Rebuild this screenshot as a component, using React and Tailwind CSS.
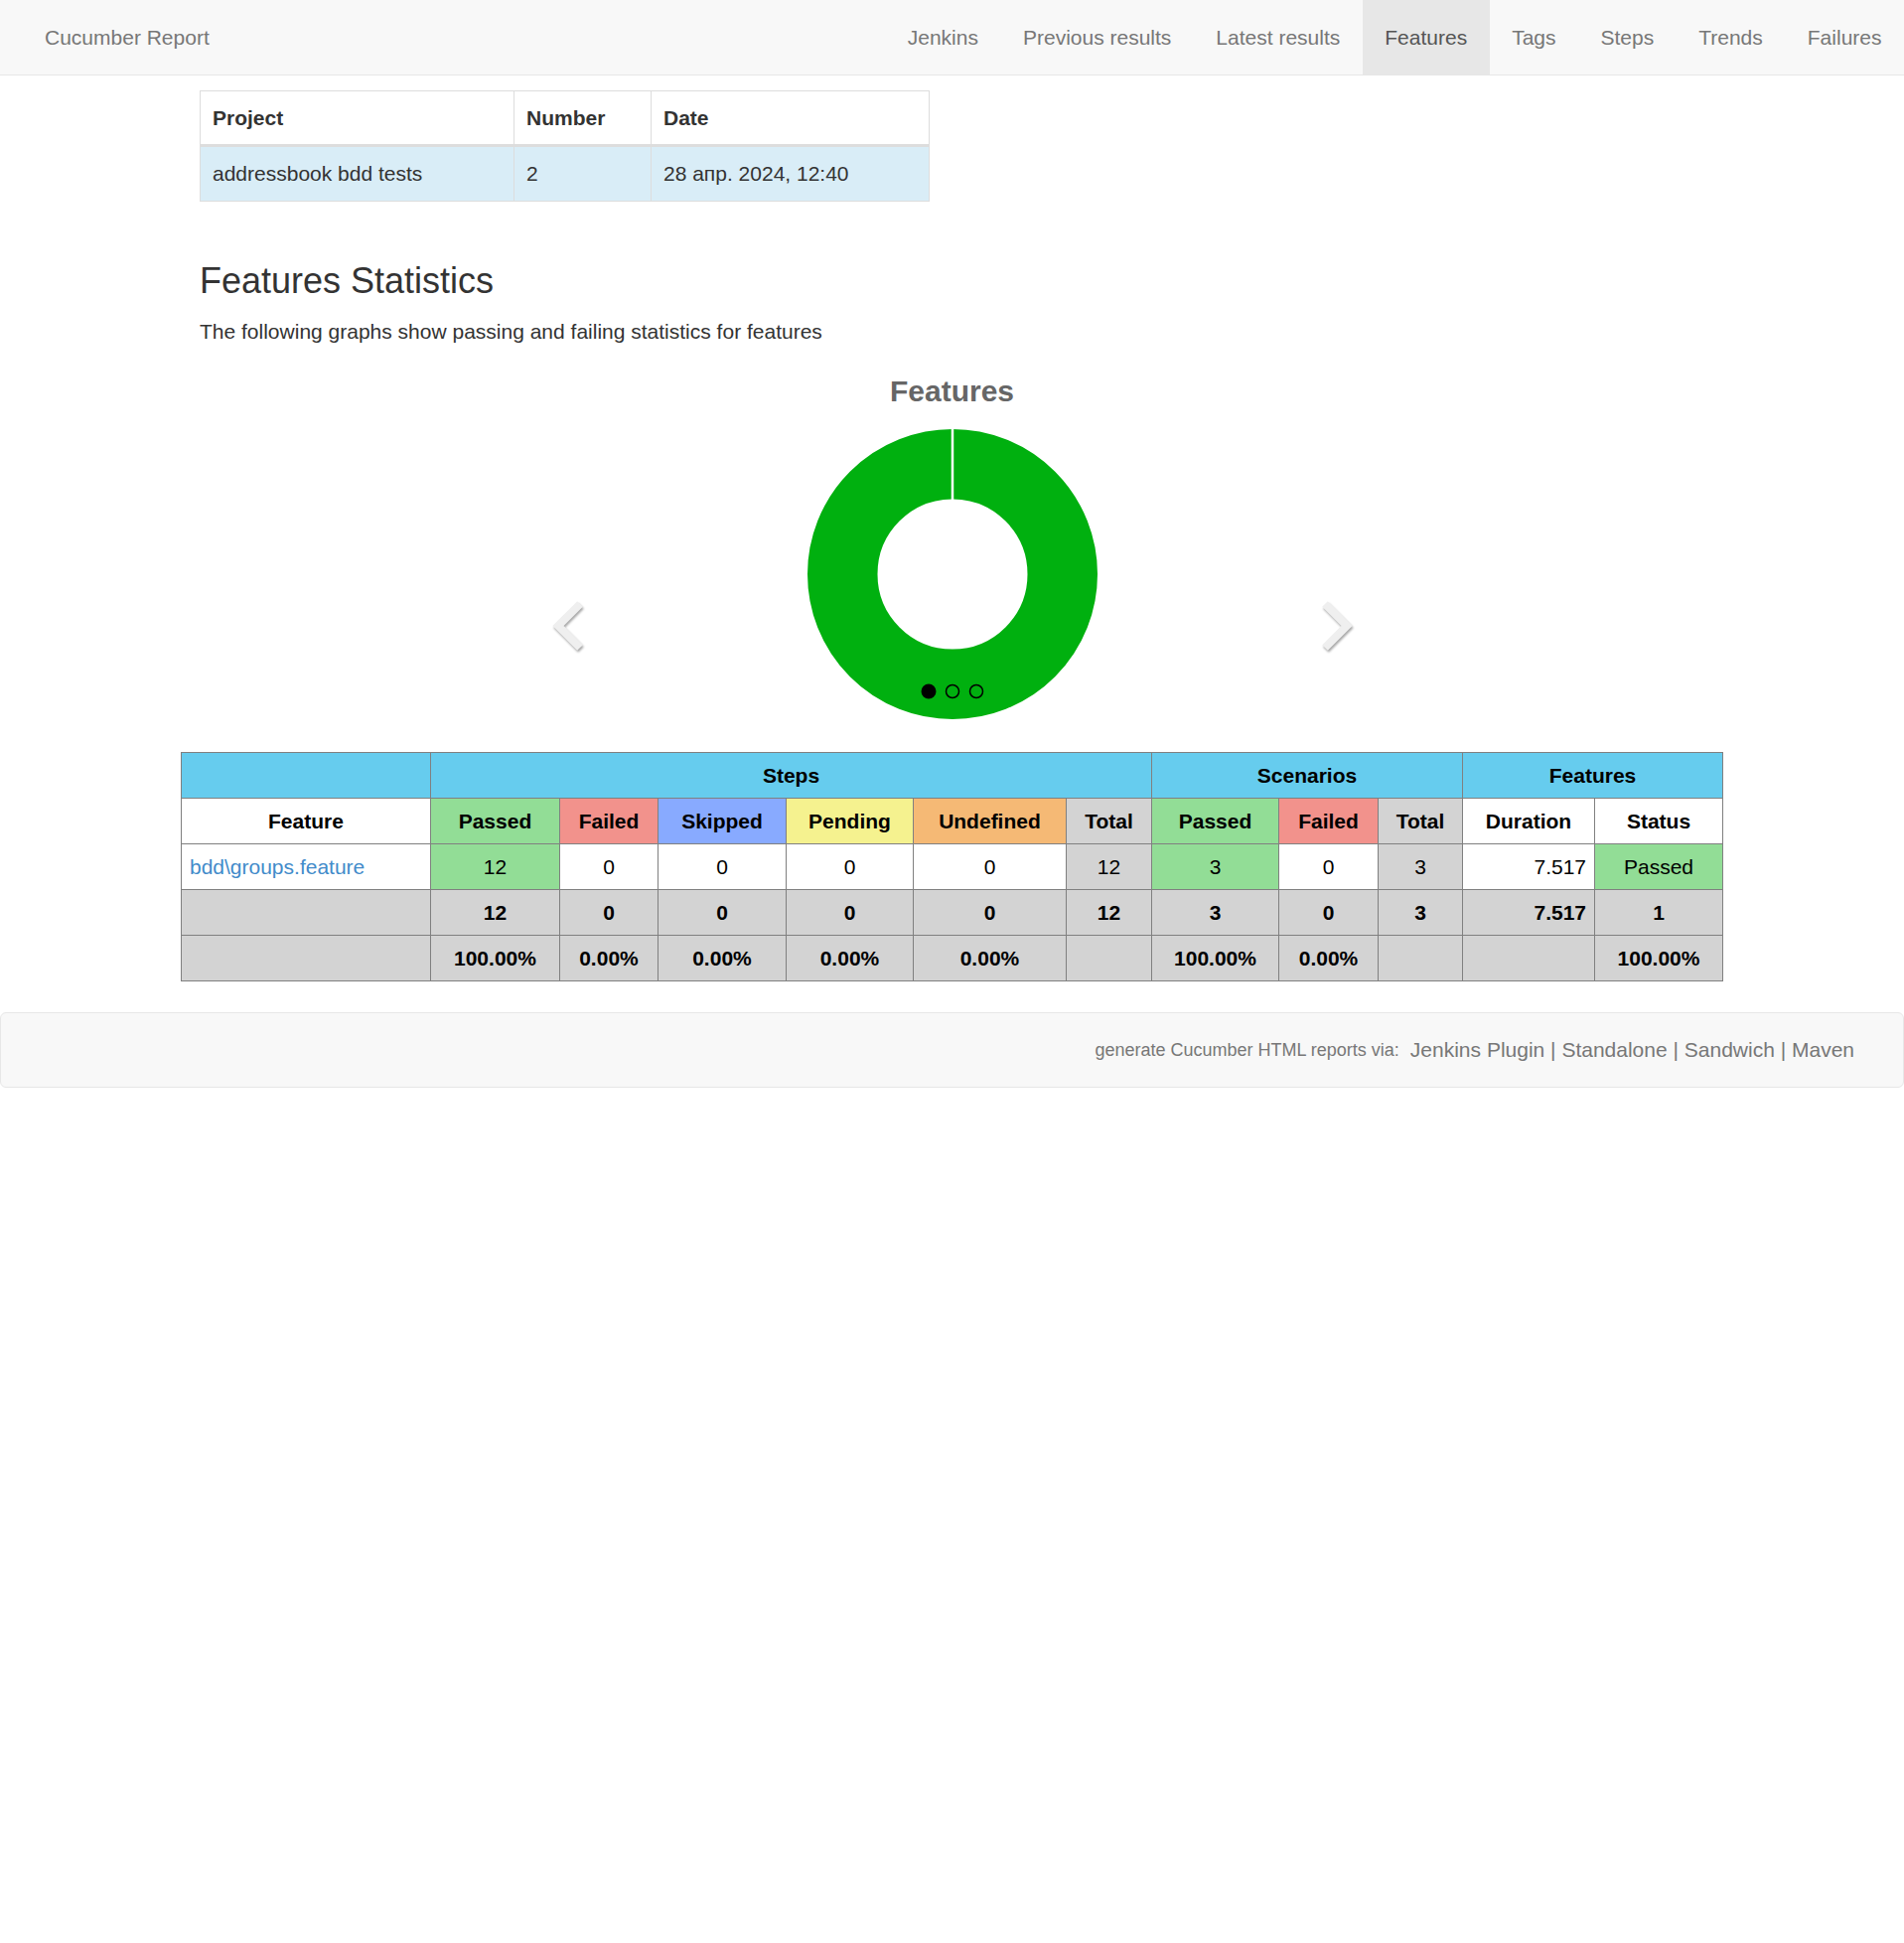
import React from 'react';

const navItems = ['Jenkins', 'Previous results', 'Latest results', 'Features', 'Tags', 'Steps', 'Trends', 'Failures'];

// column widths of the statistics table
const cols = [251, 130, 99, 129, 128, 154, 86, 128, 100, 85, 133, 129];

const cell = 'border border-[#808080] h-[46px] px-[8px] text-center';

function Navbar() {
  return (
    <nav className="h-[76px] bg-[#f8f8f8] border-b border-[#e7e7e7] flex items-stretch justify-between">
      <a className="pl-[45px] flex items-center text-[21px] text-[#777]">Cucumber Report</a>
      <ul className="flex items-stretch">
        {navItems.map(item => (
          <li
            key={item}
            className={`px-[22.5px] flex items-center text-[21px] ${item === 'Features' ? 'bg-[#e7e7e7] text-[#555]' : 'text-[#777]'}`}
          >
            {item}
          </li>
        ))}
      </ul>
    </nav>
  );
}

function ProjectTable() {
  return (
    <table className="w-[734px] table-fixed border-collapse border border-[#ddd]">
      <colgroup>
        <col className="w-[316px]" />
        <col className="w-[138px]" />
        <col className="w-[280px]" />
      </colgroup>
      <thead>
        <tr className="h-[55px]">
          <th className="border border-[#ddd] border-b-[3px] px-[12px] text-left font-bold">Project</th>
          <th className="border border-[#ddd] border-b-[3px] px-[12px] text-left font-bold">Number</th>
          <th className="border border-[#ddd] border-b-[3px] px-[12px] text-left font-bold">Date</th>
        </tr>
      </thead>
      <tbody>
        <tr className="h-[56px] bg-[#d9edf7]">
          <td className="border border-[#ddd] px-[12px]">addressbook bdd tests</td>
          <td className="border border-[#ddd] px-[12px]">2</td>
          <td className="border border-[#ddd] px-[12px]">28 апр. 2024, 12:40</td>
        </tr>
      </tbody>
    </table>
  );
}

function Chevron({ dir }) {
  const points = dir === 'left' ? '29,5 7,27 29,49' : '7,5 29,27 7,49';
  return (
    <svg width="36" height="54" viewBox="0 0 36 54" className="mt-[171px] drop-shadow-[1px_2px_1px_rgba(0,0,0,0.35)]">
      <polyline points={points} fill="none" stroke="#efefef" strokeWidth="8" strokeLinejoin="miter" strokeLinecap="butt" />
    </svg>
  );
}

function Chart() {
  return (
    <div className="flex flex-col items-center">
      <div className="mt-[27px] text-[30px] leading-[36px] font-bold text-[#666]">Features</div>
      <div className="mt-[20px] flex items-start justify-center gap-[222px]">
        <Chevron dir="left" />
        <svg width="292" height="292" viewBox="0 0 292 292">
          <circle cx="146" cy="146" r="110.75" fill="none" stroke="#00b00f" strokeWidth="70.5" />
          <line x1="146" y1="0" x2="146" y2="71" stroke="#fff" strokeWidth="2.5" />
          <circle cx="122" cy="264" r="7.5" fill="#000" />
          <circle cx="146" cy="264" r="6.5" fill="none" stroke="#000" strokeWidth="1.5" />
          <circle cx="170" cy="264" r="6.5" fill="none" stroke="#000" strokeWidth="1.5" />
        </svg>
        <Chevron dir="right" />
      </div>
    </div>
  );
}

function StatsTable() {
  const blue = 'bg-[#66ccee]';
  const green = 'bg-[#92dd96]';
  const red = 'bg-[#f2928c]';
  const gray = 'bg-[#d3d3d3]';
  return (
    <table className="mx-auto mt-[33px] w-[1552px] table-fixed border-collapse border border-[#808080] text-black">
      <colgroup>
        {cols.map((w, i) => (
          <col key={i} style={{ width: w }} />
        ))}
      </colgroup>
      <thead>
        <tr>
          <th className={`${cell} ${blue}`}></th>
          <th colSpan={6} className={`${cell} ${blue} font-bold`}>Steps</th>
          <th colSpan={3} className={`${cell} ${blue} font-bold`}>Scenarios</th>
          <th colSpan={2} className={`${cell} ${blue} font-bold`}>Features</th>
        </tr>
        <tr className="font-bold">
          <th className={`${cell} bg-white`}>Feature</th>
          <th className={`${cell} ${green}`}>Passed</th>
          <th className={`${cell} ${red}`}>Failed</th>
          <th className={`${cell} bg-[#88aaff]`}>Skipped</th>
          <th className={`${cell} bg-[#f5f28f]`}>Pending</th>
          <th className={`${cell} bg-[#f5b975]`}>Undefined</th>
          <th className={`${cell} ${gray}`}>Total</th>
          <th className={`${cell} ${green}`}>Passed</th>
          <th className={`${cell} ${red}`}>Failed</th>
          <th className={`${cell} ${gray}`}>Total</th>
          <th className={`${cell} bg-white`}>Duration</th>
          <th className={`${cell} bg-white`}>Status</th>
        </tr>
      </thead>
      <tbody>
        <tr>
          <td className={`${cell} !text-left bg-white`}>
            <a className="text-[#428bca]">bdd\groups.feature</a>
          </td>
          <td className={`${cell} ${green}`}>12</td>
          <td className={`${cell} bg-white`}>0</td>
          <td className={`${cell} bg-white`}>0</td>
          <td className={`${cell} bg-white`}>0</td>
          <td className={`${cell} bg-white`}>0</td>
          <td className={`${cell} ${gray}`}>12</td>
          <td className={`${cell} ${green}`}>3</td>
          <td className={`${cell} bg-white`}>0</td>
          <td className={`${cell} ${gray}`}>3</td>
          <td className={`${cell} !text-right bg-white`}>7.517</td>
          <td className={`${cell} ${green}`}>Passed</td>
        </tr>
        <tr className={`${gray} font-bold`}>
          <td className={cell}></td>
          <td className={cell}>12</td>
          <td className={cell}>0</td>
          <td className={cell}>0</td>
          <td className={cell}>0</td>
          <td className={cell}>0</td>
          <td className={cell}>12</td>
          <td className={cell}>3</td>
          <td className={cell}>0</td>
          <td className={cell}>3</td>
          <td className={`${cell} !text-right`}>7.517</td>
          <td className={cell}>1</td>
        </tr>
        <tr className={`${gray} font-bold`}>
          <td className={cell}></td>
          <td className={cell}>100.00%</td>
          <td className={cell}>0.00%</td>
          <td className={cell}>0.00%</td>
          <td className={cell}>0.00%</td>
          <td className={cell}>0.00%</td>
          <td className={cell}></td>
          <td className={cell}>100.00%</td>
          <td className={cell}>0.00%</td>
          <td className={cell}></td>
          <td className={cell}></td>
          <td className={cell}>100.00%</td>
        </tr>
      </tbody>
    </table>
  );
}

function Footer() {
  return (
    <footer className="mt-[31px] h-[76px] bg-[#f8f8f8] border border-[#e7e7e7] rounded-[6px] flex items-center justify-end pr-[49px] text-[#777]">
      <span className="text-[18px]">generate Cucumber HTML reports via:</span>
      <span className="ml-[11px] text-[21px]">
        <a>Jenkins Plugin</a> | <a>Standalone</a> | <a>Sandwich</a> | <a>Maven</a>
      </span>
    </footer>
  );
}

export default function App() {
  return (
    <div className="min-h-screen bg-white text-[#333] text-[21px] font-['Liberation_Sans',Arial,sans-serif]">
      <Navbar />
      <main>
        <div className="mx-auto w-[1515px] pt-[15px]">
          <ProjectTable />
          <h2 className="mt-[60px] text-[36px] leading-[40px] font-medium">Features Statistics</h2>
          <p className="mt-[16px] leading-[30px]">The following graphs show passing and failing statistics for features</p>
        </div>
        <Chart />
        <StatsTable />
      </main>
      <Footer />
    </div>
  );
}
